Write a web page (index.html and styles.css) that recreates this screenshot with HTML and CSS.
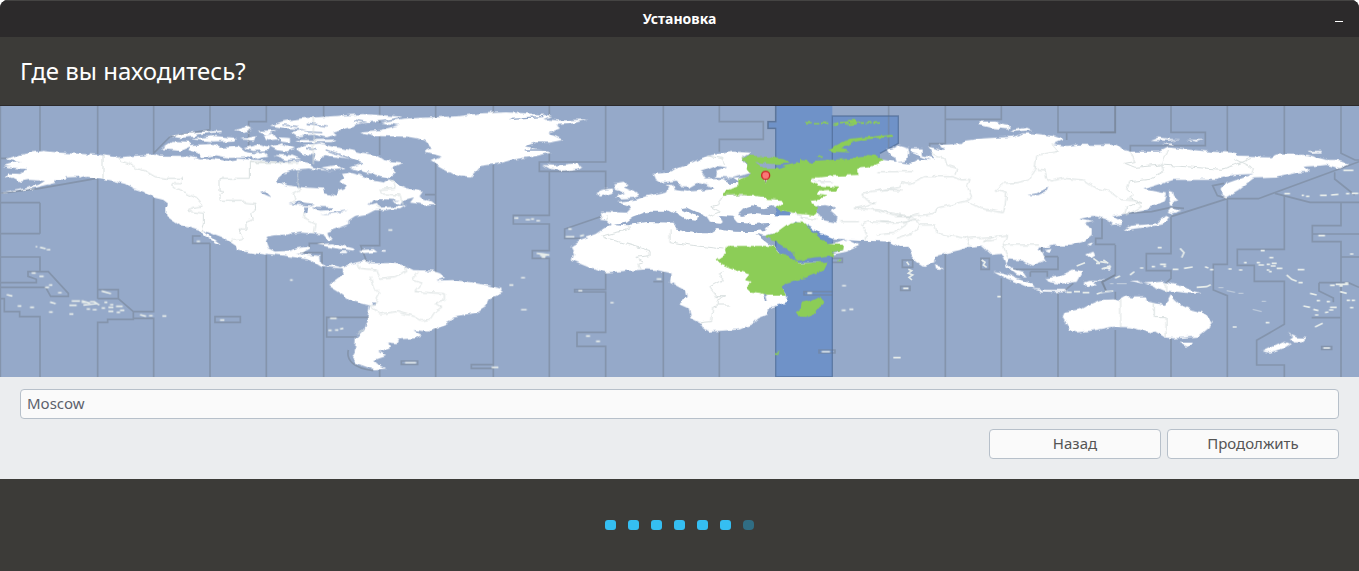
FILE: index.html
```html
<!DOCTYPE html>
<html lang="ru">
<head>
<meta charset="utf-8">
<title>Установка</title>
<link rel="stylesheet" href="styles.css">
</head>
<body>
<div class="window">
<header class="titlebar">
<span class="window-title">Установка</span>
<button class="minimize" type="button" aria-label="Свернуть"><svg width="8" height="1" viewBox="0 0 8 1"><path d="M0 0h8v1H0z" fill="#fff"/></svg></button>
</header>
<h1 class="heading">Где вы находитесь?</h1>
<main>
<svg class="map" viewBox="0 18 4077 813" preserveAspectRatio="none" role="img" aria-label="Карта часовых поясов">
<defs>
<filter id="coast" filterUnits="userSpaceOnUse" x="0" y="18" width="4077" height="813" color-interpolation-filters="sRGB"><feTurbulence type="fractalNoise" baseFrequency="0.045" numOctaves="2" seed="4"/><feDisplacementMap in="SourceGraphic" scale="15" xChannelSelector="R" yChannelSelector="G"/></filter>
</defs>
<rect class="sea" y="18" width="4077" height="813"/>
<path class="active-sea" transform="translate(2100)" d="M227 18H397V48H595V130L540 160V205H397V831H227V85H204V65H227Z"/>
<!-- time zone borders -->
<g class="zones">
<path d="M1 18V831M120 18V153M120 308V401M0 308H120M0 401H120M0 471H120V515M0 548H109V538L84 529V515H145L205 580V589H152L137 562H0M0 596H13V635H59V650H120V831M293 18V162M293 236V596M293 569H355V596H293M355 596L400 635V658H323V667H293V831M461 18V160L510 110L630 89M461 295V635H400M400 655H461V831M630 18V89M630 430V831M630 430H578V408H602M645 650H721V667H645ZM799 18V65H746V137M799 465V831M0 175H22M0 280L120 265L290 235"/>
<g transform="translate(720)"><path d="M251 18V55M251 430V437M251 500V831M419 18V70M419 105V165M419 325V437H362L380 485M251 430H208V445M166 458H246V495M587 18V55M587 190V831M555 284H587M760 18V45M760 195V831M388 652H260V711H350M419 810V831M484 783H533V793H484ZM760 794H694V805H760M325 750C318 780 340 805 400 812"/></g>
<g transform="translate(1500)"><path d="M148 18V50M148 160V186M317 18V186H118V214H317V270M148 214V346H40V372H148V452H97V475H148V831M317 345L194 387V415H240M317 518V569H224V576H317V697H231V739H317V831M490 18V210M490 510V545H460M490 545V831M658 18V65H790V118H658V155M658 695V831M827 18V65H804V85H827"/></g>
<g transform="translate(2100)"><path d="M566 18V145M566 425V831M397 575H312V585H397M397 750H357V759H405V750H397M397 475H427V487H397M607 480H638V502H607ZM602 559H630V571H602Z"/></g>
<g transform="translate(2640)"><path d="M196 18V131H149V140M196 58H364V18M196 462V831M364 535V831M534 18V97H706V18M560 97V120M534 470V508H395M534 470H485V440M534 577V831M706 435V525L668 546L678 572M706 575V600M706 690V831M666 352V415H647V433H706M451 515H502V530M451 515V530M328 475V508H303V475ZM550 575L580 550"/></g>
<g transform="translate(3300)"><path d="M45 18V97H0M213 18V97H316V137H91V155M45 525L5 546L18 572M213 350V461H139V512H213V535L197 550M213 715V831M382 18V157M382 296V493H340V570L382 587V831M553 18V163M553 285V448H412V496H463V544H553V673L470 721V795H553V831M723 18V160L765 180H777M723 307V377H637V425H723V831M637 402H777M723 471H777M0 345L155 335L213 322L252 325M213 350L382 296H475L777 185M525 280L630 307H777M372 250L338 257L352 287L382 296M704 217V237L764 285M657 548H745L777 562M657 548V573L700 594V607M635 653H723M665 740H695V748H665Z"/></g>
</g>
<path class="active-edge" transform="translate(2100)" d="M227 18V65H204V85H227V831H397V48H595V130L540 160"/>

<g class="land" filter="url(#coast)">
<!-- North and South America -->
<path d="M20 176L62 164 95 157 130 153 180 158 230 161 300 165 355 172 400 168 435 166 462 161 480 167 560 168 600 178 640 177 690 184 720 180 797 184V464L760 459 712 449 708 438 690 426 660 410 620 395 607 390 640 415 664 433 650 430 615 408 600 392 570 383 540 376 515 360 499 348 499 322 504 310 490 300 460 292 430 275 400 265 375 252 340 243 309 236 290 234 260 230 235 236 235 228 200 229 197 239 165 238 168 248 110 262 30 277 0 281 60 268 115 255 135 243 90 240 60 245 35 232 14 235 28 220 60 222 85 208 30 202 8 197 40 188 66 188 20 178Z"/>
<path d="M482 147L515 126 565 128 575 138 540 153ZM510 110L560 98 660 92 665 96 590 103 585 110 540 114ZM565 150L575 135 640 132 660 143 715 140 735 155 765 160 750 172 690 174 650 166 600 172 595 160ZM570 118L640 108 710 114 706 122 640 124ZM705 90L740 80 750 86 730 96Z"/>
<g transform="translate(720)">
<path d="M-10 176L70 182 130 187 175 182 210 190 215 200 300 222 330 218 370 228 395 240 430 248 450 235 480 255 500 265 545 275 535 290 575 304 585 312 555 314 510 308 522 292 490 300 480 315 450 300 400 298 385 315 410 308 420 323 500 318 470 325 440 330 405 330 382 342 345 348 325 362 325 372 262 396 265 405 277 420 265 422 250 404 220 400 180 398 140 404 105 406 85 410 77 425 85 445 105 455 155 452 168 445 205 440 210 444 185 458 170 460 240 468 243 490 260 500 280 496 305 502 318 495 350 487 375 482 395 490 450 489 490 495 520 510 575 512 600 520 615 533 590 542 640 540 680 545 755 558 788 568 785 580 745 598 740 615 710 638 640 650 630 665 600 680 565 695 520 690 545 705 525 715 475 718 470 730 445 728 450 742 415 755 438 768 403 780 410 790 440 806 400 808 350 790 335 770 345 750 347 715 370 690 380 660 390 617 330 602 300 580 265 558 275 548 310 522 308 505 275 503 240 500 205 478 130 467 0 453 -10 450Z"/>
<path d="M90 77L130 63 185 55 260 50 370 42 485 50 440 60 360 70 330 82 280 95 290 103 260 112 220 104 170 110 150 96 200 88 140 85ZM360 95L420 90 480 75 420 68 490 56 560 53 650 49 720 40 800 37 860 40 935 47 910 58 960 62 1042 58 1000 70 950 75 960 85 925 100 945 108 970 120 930 128 890 127 860 138 880 145 935 158 880 170 820 178 780 190 720 198 690 233 660 230 640 222 600 200 575 183 605 170 555 155 575 145 555 125 530 115 500 110 410 108ZM168 147L190 135 240 130 275 140 310 145 360 157 410 167 430 180 490 188 455 205 465 220 445 233 410 225 370 215 330 203 365 190 340 178 300 172 250 165 240 184 220 180 230 165 190 163ZM90 140L125 130 165 145 140 155 110 150ZM10 145L60 132 90 142 85 150 40 153ZM100 165L150 165 180 177 140 180ZM165 120L290 119 275 126 180 127ZM240 203L290 195 310 207 280 210ZM0 118L50 108 45 122ZM50 93L110 90 80 105ZM0 85L35 88 20 94ZM30 162L70 155 85 170 50 177ZM70 108L100 100 112 118 80 122ZM115 112L150 114 150 128 120 125ZM228 434L280 430 340 445 345 452 300 447ZM360 450L400 447 412 456 370 459ZM302 454h16v5h-16ZM425 453h12v5h-12ZM435 325L500 315 480 328Z"/>
</g>
<!-- Europe and Africa -->
<g transform="translate(1500)">
<path d="M130 195L160 197 225 190 247 199 235 206 190 212 150 207ZM290 275L310 269 335 265 338 278 300 290ZM340 250L370 245 382 252 372 262 400 275 420 288 400 294 345 296 360 285 375 278 345 268ZM458 222L500 218 560 195 620 168 700 155 755 158 740 165 725 175 745 200 755 218 700 233 645 230 648 215 682 202 650 198 605 215 617 235 595 248 570 262 548 262 530 242 480 248 465 238Z"/>
<path d="M303 335L380 338 395 322 352 306 410 298 440 288 500 275 508 262 497 255 520 255 525 270 560 275 640 268 645 252 670 243 712 240 860 240V400L780 403 735 430 500 420 335 376 320 362 298 360 305 350Z"/>
<path d="M335 372L380 366 440 366 520 366 525 385 560 392 600 400 630 400 650 388 720 395 770 403 820 438 850 470 880 490 960 489 950 510 910 530 850 545 840 560 862 590 858 607 805 625 800 645 775 655 760 670 720 688 625 695 610 685 600 668 575 655 565 625 535 612 560 590 555 570 510 545 515 520 490 515 470 510 440 508 385 512 320 517 270 502 215 480 222 460 212 440 240 420 290 402Z"/>
</g>
<!-- Asia -->
<g transform="translate(2100)">
<path d="M-20 240L400 225 480 200 540 178 680 200V500L628 440 600 440 570 423 480 422 440 418 400 415 360 400 320 375 285 365 200 408 150 402 210 375 150 300ZM380 432L410 430 440 418 478 437 440 455 400 463 395 460 430 450Z"/>
</g>
<g transform="translate(2640)">
<path d="M20 148L40 145 60 135 85 142 88 160 80 183 50 188 45 170 28 162ZM-60 215L0 190 20 186 90 191 112 178 150 180 95 158 95 145 125 145 125 165 165 175 155 160 145 140 185 150 195 147 175 135 245 132 255 122 310 115 400 110 430 100 460 100 520 108 550 118 520 132 560 138 590 134 650 135 710 135 725 148 750 155 840 155 865 142 920 148 990 155 1065 158 1070 170 1170 172 1190 163 1280 165 1340 180 1375 180 1410 192 1380 205 1340 195 1320 197 1270 200 1290 215 1250 218 1190 233 1120 235 1100 250 1075 270 1038 292 1025 285 1022 265 1035 252 1120 222 1060 225 1010 240 880 240 790 268 830 275 858 280 850 305 790 332 720 345 700 350 725 365 725 375 695 378 697 367 680 358 655 350 635 348 595 358 640 365 615 372 635 385 635 405 610 425 570 437 520 436 495 443 475 442 480 450 500 480 455 497 430 482 390 478 378 490 400 508 430 515 440 530 410 525 380 500 365 462 335 465 305 437 270 440 240 450 168 468 165 485 135 501 110 485 95 465 85 438 60 440 30 425 0 423 -100 420Z"/>
<path d="M295 75L305 65 350 65 365 74 390 78 385 88 330 83ZM390 92L440 83 457 90 400 96ZM165 495L188 503 180 510 168 508ZM340 513L370 518 455 550 465 562 440 560 380 535ZM455 567L500 570 555 570 560 577 480 574ZM497 535L540 528 580 508 607 514 590 545 540 552 505 545ZM610 545L625 540 680 540 640 545 650 557 635 555 625 562ZM619 463L640 455 645 465 630 475ZM665 502L690 495 692 510ZM622 433L640 425 632 437ZM492 450L515 447 505 456Z"/>
</g>
<!-- Australia and Oceania -->
<g transform="translate(3300)">
<path d="M0 600L45 598 55 602 75 590 100 592 140 592 135 602 170 610 195 615 205 600 213 585 225 600 240 613 270 628 300 635 325 650 338 665 325 685 295 710 220 715 195 712 165 694 150 700 130 692 90 682 40 680 -10 690 -70 697 -90 693 -95 680 -112 650 -105 635 -60 628 -35 615ZM240 728L280 728 262 741ZM488 755L530 735 555 725 572 732 555 742 510 758ZM560 698L590 712 620 713 605 727 580 727 570 718 580 712ZM88 542L115 542 130 550 190 545 250 560 270 570 308 582 270 580 230 575 190 572 150 555ZM70 390L90 378 170 370 195 348 208 352 195 372 150 380 90 388ZM203 335L212 322 247 332 215 340ZM208 273L218 275 222 290 235 302 218 304 220 318 210 316 206 300ZM155 120L175 112 210 117 240 118 205 122ZM255 119L310 120 290 125ZM185 132L215 130 225 137ZM625 153H665V157L635 158Z"/>
</g>
</g>

<!-- small islands -->
<g class="islets">
<path d="M140 449H151M107 440H112M120 442L137 446M95 519H107M118 529H131M135 562H147M147 555H157M174 578H185M20 584L37 588M53 618H64M90 622H102M147 636H158M150 606L167 611M208 616H230M208 642H220M215 603H240M245 602L270 610M250 615L290 611M245 607H260M270 605H285M260 627H270M278 629H290M305 624H315M313 607H322M282 605L298 615M330 614H340M325 622H340M325 634H340M348 619H368M350 637H360M360 631H373M305 573L333 581M420 644L438 649M447 647H458M487 648H499M660 660H673M590 424H600M870 540H878M990 655H1010M985 691H995M1005 690H1015M1020 687L1030 685M1215 788H1248M1475 802H1495M1165 390H1177M1528 555H1540M1563 533H1575M1563 629H1580M1544 354H1555M1577 359H1590M1593 357H1602M1609 362H1620M1705 387H1715M1697 410H1723M1740 408L1752 405M1610 460L1630 462L1648 465M1620 466H1640M1625 471H1636M1735 572H1747M1831 608H1841M1758 708H1770M1788 724H1800M1970 537H1984M2526 557H2538M2525 631H2537M2548 628H2560M2422 579H2436M2465 755H2490"/>
<g transform="translate(2640)"><path d="M560 577H575M582 575H600M608 578H628M650 582L667 577M675 575L700 573M640 475L660 490M670 480L685 490M648 490H660M590 498L615 488M305 480L315 487 310 495 320 502M80 485L87 495M85 508L95 512 85 520 98 525 87 532 96 540M70 565H85M40 773H62M352 590H362"/></g>
<g transform="translate(3300)"><path d="M553 281H570M605 286H612M618 289H628M660 286H680M693 285L715 283M738 281H748M755 280H775M730 211H760M655 407H675M240 445L252 458 245 473M173 443H185M155 500H165M180 493H198M190 499H198M218 508H235M252 505L278 501M315 500L325 504M330 509H340M385 507H395M417 510H427M432 488H440M482 452H494M508 473H520M470 488H480M475 495H492M500 493H510M515 490H530M512 498H527M500 510H508M507 515H515M530 505H547M593 509H613M560 525L575 538 590 544M595 548H608M290 562L320 560 332 554M497 668H508M398 681H410M690 556H704M707 553H745M718 558H728M735 549H745M720 575L740 580M630 580L650 585M610 618L630 622M650 602H660M680 605H690M640 628L655 632M645 645H655M675 638L685 636M687 630H700M690 622H710M740 601H750M755 601H765M750 623H760M645 681L668 670M670 744H690M750 462H760M90 525L103 515M120 504H130M45 535L60 528M0 485L20 488M5 507L20 503 33 499"/><path class="faint" d="M355 563H370M380 572L405 577M415 580H430M458 628L485 635M30 551H40M50 551H80M0 580L35 575M485 604H498"/></g>
</g>

<!-- inland and enclosed water -->
<g class="water" filter="url(#coast)">
<g transform="translate(720)"><path d="M110 238L130 220 170 208 205 205 240 210 300 215 310 235 298 245 318 255 310 265 295 270 290 290 255 280 252 266 190 262 140 256 115 246ZM145 313L175 305 225 312 210 316ZM192 320L208 320 205 340 195 342ZM215 320L280 322 275 330 240 332 225 326ZM240 342L325 330 290 340ZM60 276L75 272 95 292 80 286ZM385 312L420 298 480 300 455 306 400 308ZM395 605h10v7h-10Z"/><path d="M190 95L250 98M130 75L180 80M200 70L260 78M340 60L420 75M260 150L370 190M200 145L230 150" class="channels"/></g>
<g transform="translate(1500)"><path d="M337 372L380 365 400 350 440 335 490 335 505 328 540 345 560 358 590 362 595 352 560 335 540 325 560 322 610 345 620 350 630 365 660 368 665 363 657 348 700 350 715 368 760 372 812 368 795 390 740 396 700 395 650 387 630 400 600 400 560 392 525 385 525 368 440 366 380 376ZM715 340L730 325 760 316 790 325 820 318 828 330 870 335 872 345 800 345 760 342 720 348ZM767 402L780 404 822 438 810 436ZM790 582h8l5 18h-8ZM665 236H700L720 250 690 248Z"/><path class="channels" d="M30 55L130 50M75 150L140 150M80 138L130 130M150 103L190 105"/></g>
<path d="M2450 318L2475 315 2505 322 2495 335 2512 350 2510 368 2470 360 2458 345 2445 330ZM3080 286L3110 280 3145 262 3140 273 3115 285Z"/>
<path class="active-sea" d="M2327 322L2327 346H2372L2370 335ZM2445 400L2470 402 2500 416 2495 432H2480Z"/>
</g>

<!-- country borders -->
<g class="borders" filter="url(#coast)">
<path d="M309 167V236M355 172L365 184 385 190 410 205 440 215 465 230 500 235H547V251H516V262L560 280 590 295 610 318 580 322 565 334 613 340V372L605 395M840 187H751V235H660V275L669 279 660 285V301H725L735 310 765 313 767 330 755 340 760 358 738 367V390H717L728 415 700 420 690 427"/>
<g transform="translate(720)"><path d="M31 187H175M175 255L180 270 160 280 165 300 152 308M195 340L193 355 225 370 220 400M455 235L468 265 420 268 425 282 480 285 490 315M220 52V190M175 210V255M405 315L420 325M352 490L360 505 410 510 420 535 465 530 500 515 495 495M390 530L400 560 420 580 405 610 390 617 420 642 470 635 525 650 545 662 570 658 585 635 605 622 585 610 613 600V581L525 575 545 550 515 540 535 515M350 700L370 690"/></g>
<g transform="translate(1500)"><path d="M385 375L388 388 305 408 320 415 450 452V467L405 472 430 485 415 490 425 508M510 388V425L570 435 670 447M670 515L655 525 670 538 630 560 650 590 675 590 652 600V615H690M652 617L638 620 635 665 600 668M620 168L665 175 675 195M670 290L655 315 632 320 660 335 625 350M318 343L325 350 318 362M670 287L760 285 830 297"/></g>
<g transform="translate(2100)"><path d="M535 215H640M605 270L565 268 510 275 485 280 500 300 525 310 465 325 540 330 580 345 620 350 660 340M485 375L505 365 580 370 660 360M485 375L500 400 495 420M530 405L580 400 625 370M275 338L305 345 310 360M300 352L350 358M420 365L480 365M335 230L345 245 400 245"/></g>
<g transform="translate(2640)"><path d="M-10 272L60 262 65 245 90 250 135 230 220 230 245 240 270 238 262 260 275 290 260 303 170 325 165 340 100 350 0 333M155 160L195 175 200 195 230 205 225 225M260 303L300 325 370 338 375 315 380 280 345 270 370 250 410 248 445 240 465 210 470 165 535 155 515 130M470 208L495 210 500 235 515 243 550 235 610 240 650 265 690 275 720 298 760 302 785 320 740 345M0 365L75 370 100 355 120 375 165 375 170 400 260 415 340 410 380 405 370 435 475 435M50 415L95 400 120 375M260 410L270 437M340 410L310 425 350 420M370 435L385 478M45 350L95 350 80 360"/></g>
<g transform="translate(3300)"><path d="M62 600V682M163 610V653H198V712M90 155L105 185 75 190 105 202 185 195 205 150M185 195L365 208 405 195 450 175M405 178L460 205 455 220M185 195L190 215 150 238 90 245 80 268 100 285 85 295 125 308 80 320 75 340M197 548V573"/></g>
</g>

<!-- selected zone -->
<g class="active-land" filter="url(#coast)"><g transform="translate(2100)">
<path d="M125 175L150 167 205 170 250 178 270 184 262 191 215 192 165 186 185 200 198 207 235 205 265 195 300 188 300 177 320 180 330 190 345 182 420 178 460 175 490 170 500 165 535 168 552 182 505 202 475 205 475 225 400 228 360 232 335 232 332 245 355 257 395 260 415 263 408 272 350 275 355 284 380 288 360 297 335 300 340 315 357 325 345 345 320 340 280 338 240 330 225 325 250 308 245 300 200 297 190 290 130 285 68 287 75 272 115 260 115 240 155 223 140 205 143 192Z"/>
<path d="M195 408L225 400 245 385 270 367 310 367 330 385 355 410 380 432 432 435 430 450 400 455 402 468 295 482 265 450 225 425ZM85 438H220L235 455 265 468 300 490 383 485 370 512 320 532 260 548 245 560 258 587 200 587 180 579 150 575 137 562 155 545 135 540 148 523 100 508 65 495 50 478 75 462 72 448ZM305 608L345 598 360 591 373 605 360 620 340 645 325 651 300 650 290 635 302 625ZM385 148L420 130 450 116 510 110 580 104 580 110 500 118 455 127 425 145 450 157 400 155Z"/>
<path d="M315 68H338M342 71H355M360 70H385M400 73L415 69M420 68L445 66M450 67H470M475 66H495M435 74L470 71M445 62H465M500 68H515M520 66H540M225 759H237M408 481H418M350 171H368" class="green-islets"/>
</g></g>
<!-- location pin -->
<g><path d="M2292 238h10l-5 12z" fill="#dfe5d8"/><path d="M2297 234V248" stroke="#888c83" stroke-width="3"/><circle cx="2297" cy="226" r="12" fill="#fb7776" stroke="#cc2424" stroke-width="4"/></g>
</svg>
<form class="controls">
<input class="city" type="text" value="Moscow" aria-label="Город">
<div class="actions"><button type="button">Назад</button><button type="button">Продолжить</button></div>
</form>
</main>
<footer class="steps" aria-label="Ход установки"><span></span><span></span><span></span><span></span><span></span><span></span><span class="pending"></span></footer>
</div>
</body>
</html>
```

FILE: styles.css
```css
* { box-sizing: border-box; }
body { margin: 0; background: #fff; font-family: "Noto Sans", "Open Sans", sans-serif; font-size: 15px; }
.window { display: flex; flex-direction: column; min-height: 100vh; background: #3c3b38; border-radius: 8px 8px 0 0; overflow: hidden; }
.titlebar { display: grid; grid-template-columns: 1fr auto 1fr; align-items: center; height: 37px; padding: 0 16px; border-top: 1px solid #454443; background: #2c2a2b; color: #fff; }
.window-title { grid-column: 2; font-size: 14px; font-weight: 700; line-height: 20px; }
.minimize { display: flex; align-items: center; justify-self: end; height: 20px; padding: 4px 0 0; border: 0; background: none; }
.heading { margin: 0; padding: 18px 20px; border-bottom: 1px solid #2c2a2b; color: #fff; font-size: 24px; font-weight: 400; line-height: 32px; }
.map { display: block; width: 100%; height: auto; }
.sea { fill: #95a9c9; }
.water { fill: #95a9c9; }
.active-sea { fill: #6f92c8; }
.zones { fill: none; stroke: #74808f; stroke-opacity: .5; stroke-width: 5; }
.active-edge { fill: none; stroke: #4f6b94; stroke-opacity: .7; stroke-width: 4; }
.land { fill: #fff; }
.islets { fill: none; stroke: #e6ecea; stroke-width: 5; }
.faint { stroke: #bcc9da; stroke-width: 4; }
.channels { fill: none; stroke: #95a9c9; stroke-width: 4; }
.borders { fill: none; stroke: #d8dfdf; stroke-width: 3; }
.active-land { fill: #8ccd57; }
.green-islets { fill: none; stroke: #8ccd57; stroke-width: 5; }
.controls { display: flex; flex-direction: column; gap: 10px; padding: 12px 20px 20px; background: #ebedef; }
.city { width: 100%; height: 30px; padding: 0 6px 2px; border: 1px solid #b7c0ca; border-radius: 4px; background: #fafafa; color: #5c616c; font: inherit; }
.actions { display: flex; justify-content: flex-end; gap: 6px; }
.actions button { width: 172px; height: 30px; padding: 0 0 2px; border: 1px solid #b7c0ca; border-radius: 4px; background: #fafafa; color: #555; font: inherit; }
.steps { display: flex; flex: 1; align-items: center; justify-content: center; gap: 12px; min-height: 92px; }
.steps span { width: 11px; height: 10px; border-radius: 3px; background: #35bef2; }
.steps .pending { border-radius: 4px; background: #306d83; }
```
